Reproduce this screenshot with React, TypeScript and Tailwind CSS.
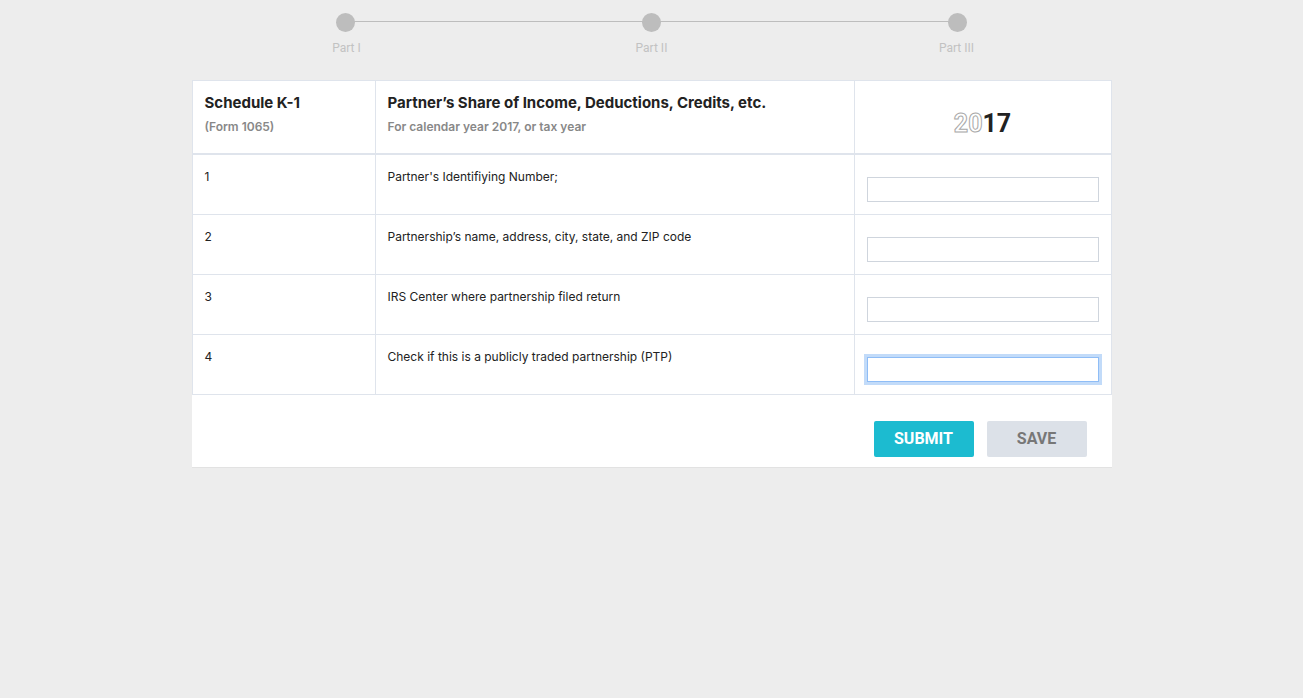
import React from "react";

const rows = [
  { n: "1", t: "Partner's Identifiying Number;" },
  { n: "2", t: "Partnership’s name, address, city, state, and ZIP code" },
  { n: "3", t: "IRS Center where partnership filed return" },
  { n: "4", t: "Check if this is a publicly traded partnership (PTP)", focus: true },
];

export default function App() {
  return (
    <div className="min-h-[698px] w-full bg-[#ededed] font-['Inter','Liberation_Sans',sans-serif]">
      {/* stepper */}
      <div className="mx-auto w-[700px] pt-[13px]">
        <div className="relative mx-auto h-[18px] w-[631px]">
          <div className="absolute left-[9px] right-[9px] top-[8px] h-px bg-[#bdbdbd]" />
          <div className="relative flex justify-between">
            <span className="h-[19px] w-[19px] rounded-full bg-[#bdbdbd]" />
            <span className="h-[19px] w-[19px] rounded-full bg-[#bdbdbd]" />
            <span className="h-[19px] w-[19px] rounded-full bg-[#bdbdbd]" />
          </div>
        </div>
        <div className="mx-auto mt-[8px] flex w-[700px] justify-between px-[5px] font-['Roboto',sans-serif] text-[12px] text-[#c2c2c2]">
          <span className="w-[80px] text-center">Part I</span>
          <span className="w-[80px] text-center">Part II</span>
          <span className="w-[80px] text-center">Part III</span>
        </div>
      </div>

      {/* card */}
      <div className="mx-auto mt-[23px] w-[920px] bg-white shadow-[0_1px_0_#e2e2e2]">
        <div className="border border-[#dfe4ec]">
          {/* header */}
          <div className="grid h-[74px] grid-cols-[183px_479px_1fr] border-b-2 border-[#dfe4ec]">
            <div className="border-r border-[#dfe4ec] px-[12px] pt-[13px]">
              <div className="text-[15px] font-bold leading-[18px] text-[#222]">Schedule K-1</div>
              <div className="mt-[8px] text-[12px] font-semibold leading-[14px] text-[#888]">(Form 1065)</div>
            </div>
            <div className="border-r border-[#dfe4ec] px-[12px] pt-[13px]">
              <div className="text-[15px] font-bold leading-[18px] text-[#222]">
                Partner’s Share of Income, Deductions, Credits, etc.
              </div>
              <div className="mt-[8px] text-[12px] font-semibold leading-[14px] text-[#888]">
                For calendar year 2017, or tax year
              </div>
            </div>
            <div className="flex items-center justify-center pt-[14px] font-['Roboto',sans-serif] text-[25px] font-bold">
              <span className="text-white [-webkit-text-stroke:1px_#a8a8a8]">20</span>
              <span className="text-[#222]">17</span>
            </div>
          </div>
          {/* rows */}
          {rows.map((r, i) => (
            <div
              key={r.n}
              className={`grid grid-cols-[183px_479px_1fr] ${i < rows.length - 1 ? "h-[60px] border-b border-[#dfe4ec]" : "h-[59px]"}`}
            >
              <div className="border-r border-[#dfe4ec] px-[12px] pt-[13px] text-[12px] text-[#222]">{r.n}</div>
              <div className="border-r border-[#dfe4ec] px-[12px] pt-[13px] text-[12px] text-[#222]">{r.t}</div>
              <div className="px-[12px] pt-[22px]">
                {r.focus ? (
                  <div className="h-[25px] w-[232px] border border-[#8fbdf6] shadow-[0_0_0_3px_#c2dbf9]" />
                ) : (
                  <div className="h-[25px] w-[232px] border border-[#cfd5dd]" />
                )}
              </div>
            </div>
          ))}
        </div>
        {/* footer */}
        <div className="flex h-[72px] items-start justify-end gap-[13px] pr-[25px] pt-[26px] font-['Roboto',sans-serif]">
          <button className="h-[36px] w-[100px] rounded-[2px] bg-[#1cbbd0] text-[16px] font-bold text-white">SUBMIT</button>
          <button className="h-[36px] w-[100px] rounded-[2px] bg-[#dce1e8] text-[16px] font-bold text-[#777]">SAVE</button>
        </div>
      </div>
    </div>
  );
}
